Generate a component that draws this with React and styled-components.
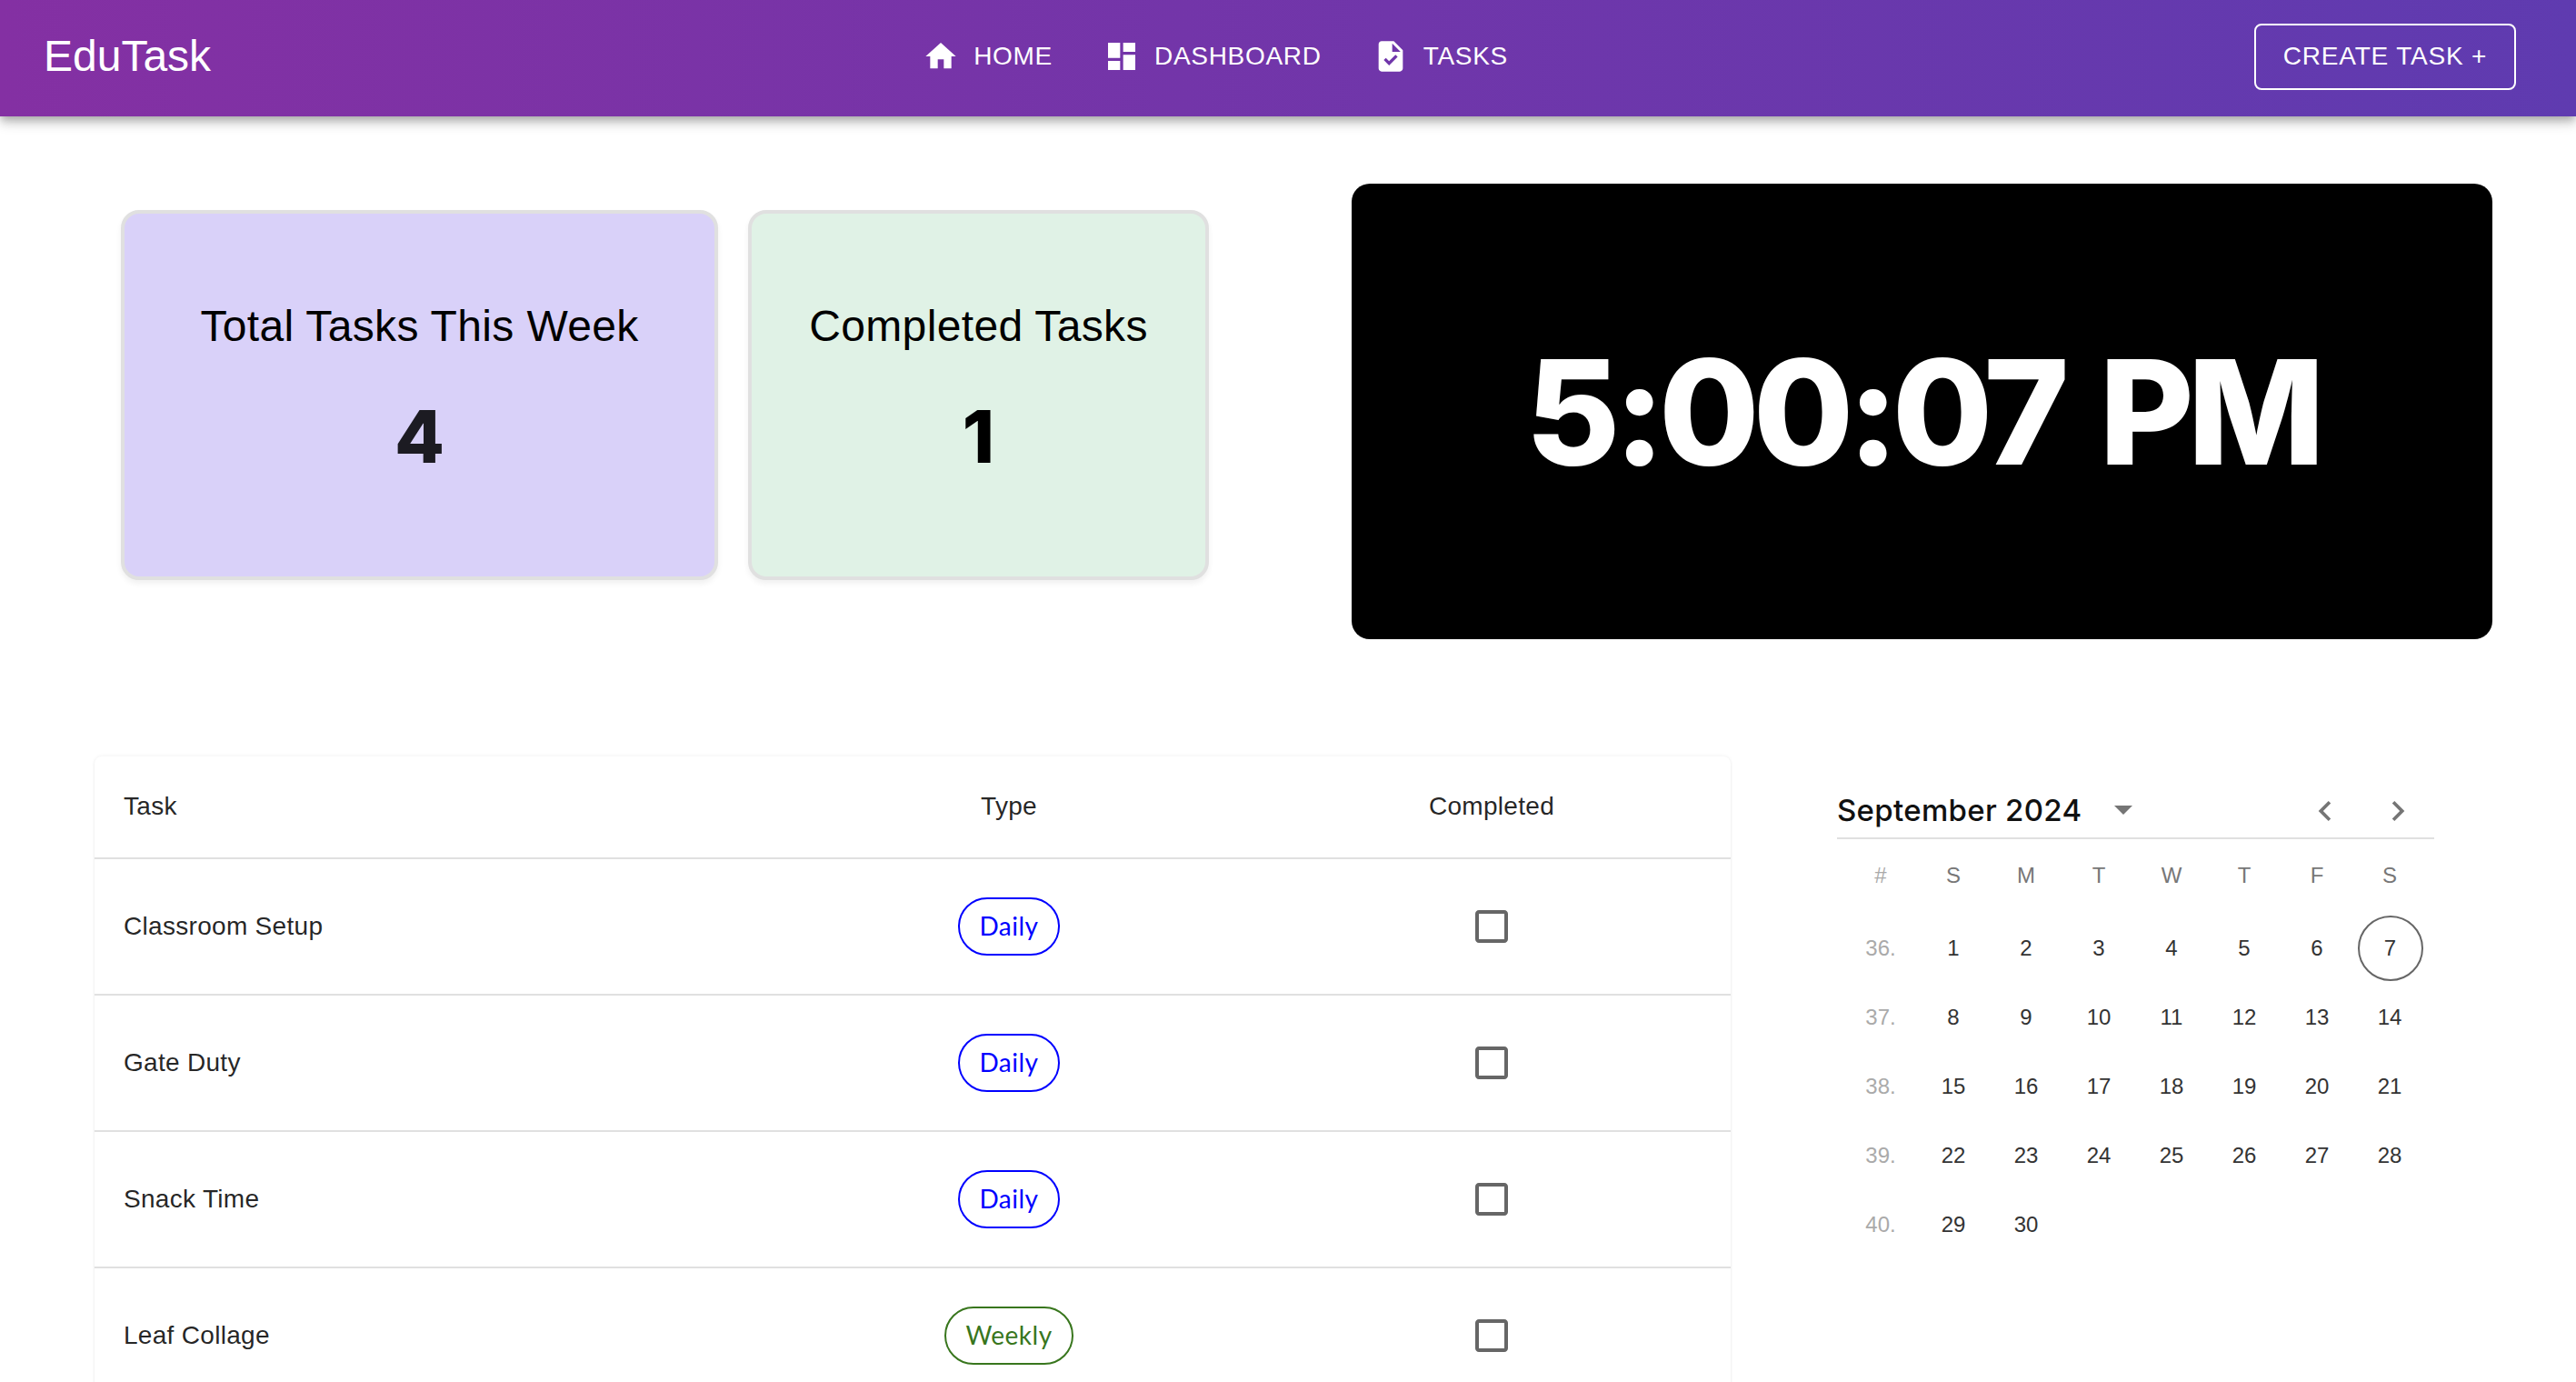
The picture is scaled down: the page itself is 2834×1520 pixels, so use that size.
import React from 'react'
import styled, { createGlobalStyle } from 'styled-components'

const GlobalStyle = createGlobalStyle`
  html, body {
    margin: 0;
    height: 100%;
    overflow: hidden;
    background: #fff;
    font-family: "Liberation Sans", Arial, sans-serif;
  }
`

const AppBar = styled.header`
  position: relative;
  z-index: 2;
  height: 128px;
  box-sizing: border-box;
  padding: 0 66px 4px 48px;
  display: flex;
  align-items: center;
  justify-content: space-between;
  color: #fff;
  background: linear-gradient(90deg, #8430a3, #5f3bb0);
  box-shadow: 0 4px 8px -2px rgba(0,0,0,.2), 0 8px 10px 0 rgba(0,0,0,.14), 0 2px 20px 0 rgba(0,0,0,.12);
`
const Logo = styled.div`
  font-size: 48px;
  line-height: 1;
`
const Nav = styled.nav`
  display: flex;
  align-items: center;
  gap: 24px;
  margin-right: 38px;
`
const NavItem = styled.a`
  display: flex;
  align-items: center;
  gap: 16px;
  padding: 0 16px;
  font-size: 28px;
  letter-spacing: .7px;
  svg { width: 40px; height: 40px; fill: #fff; }
`
const CreateButton = styled.button`
  width: 288px;
  height: 73px;
  border: 2px solid #fff;
  border-radius: 8px;
  background: transparent;
  color: #fff;
  font-family: inherit;
  font-size: 28px;
  letter-spacing: .02857em;
`

const TopRow = styled.section`
  display: flex;
  align-items: flex-start;
  padding: 74px 0 0 133px;
`
const Cards = styled.div`
  display: flex;
  gap: 33px;
  margin-top: 29px;
  margin-right: 157px;
`
const StatCard = styled.div`
  width: ${p => p.$width}px;
  height: 407px;
  box-sizing: border-box;
  border: 4px solid #e0e0e0;
  border-radius: 20px;
  background: ${p => p.$bg};
  box-shadow: 0 4px 6px rgba(0,0,0,.06);
  text-align: center;
  padding-top: 94px;
`
const StatTitle = styled.div`
  font-size: 48px;
  letter-spacing: .35px;
  line-height: 60px;
  color: #000;
`
const StatValue = styled.div`
  margin-top: 45px;
  font-family: Inter, sans-serif;
  font-size: 80px;
  line-height: 92px;
  font-weight: 800;
  color: ${p => p.$color};
`
const ClockPanel = styled.div`
  width: 1255px;
  height: 501px;
  border-radius: 20px;
  background: #000;
  color: #fff;
  display: flex;
  align-items: center;
  justify-content: center;
  font-family: Inter, sans-serif;
  font-size: 160px;
  font-weight: 800;
  letter-spacing: -7px;
  word-spacing: 12px;
`

const BottomRow = styled.section`
  display: flex;
  align-items: flex-start;
  padding: 129px 0 0 104px;
`
const TaskTable = styled.div`
  width: 1800px;
  flex: none;
  border-radius: 8px;
  box-shadow: 0 -1px 4px rgba(0,0,0,.04), 0 2px 1px -1px rgba(0,0,0,.05), 0 1px 3px 0 rgba(0,0,0,.08);
  color: rgba(0,0,0,.87);
`
const Row = styled.div`
  display: grid;
  grid-template-columns: 738px 536px 526px;
  align-items: center;
  height: ${p => (p.$head ? 113 : 150)}px;
  padding-bottom: ${p => (p.$head ? 2 : 0)}px;
  box-sizing: border-box;
  border-bottom: 2px solid #e0e0e0;
  font-size: 28px;
  letter-spacing: .01071em;
`
const TaskCell = styled.div`
  padding-left: 32px;
`
const CenterCell = styled.div`
  display: flex;
  justify-content: center;
`
const Chip = styled.span`
  display: inline-flex;
  align-items: center;
  height: 64px;
  box-sizing: border-box;
  padding: 0 21px 2px;
  border: 2px solid ${p => p.$color};
  border-radius: 32px;
  color: ${p => p.$color};
  font-family: Lato, sans-serif;
  font-size: 28px;
  letter-spacing: .5px;
`
const BoxIcon = styled.svg`
  width: 48px;
  height: 48px;
  fill: #666;
`

const Calendar = styled.div`
  width: 657px;
  flex: none;
  margin-left: 117px;
  margin-top: 26px;
`
const CalHeader = styled.div`
  display: flex;
  align-items: center;
  height: 65px;
  box-sizing: border-box;
  border-bottom: 2px solid #e0e0e0;
  padding-top: 2px;
`
const CalTitle = styled.div`
  font-family: Inter, sans-serif;
  font-size: 33px;
  font-weight: 500;
  letter-spacing: .3px;
  color: #111;
  width: 305px;
`
const Caret = styled.span`
  width: 0;
  height: 0;
  border-left: 10px solid transparent;
  border-right: 10px solid transparent;
  border-top: 10px solid #757575;
`
const Chevrons = styled.div`
  display: flex;
  gap: 36px;
  margin-left: auto;
  margin-right: 18px;
  margin-top: 2px;
  svg { width: 44px; height: 44px; fill: #757575; }
`
const CalGrid = styled.div`
  display: grid;
  grid-template-columns: repeat(8, 80px);
  grid-auto-rows: 76px;
  padding-left: 8px;
  font-size: 24px;
  text-align: center;
  margin-top: 5px;
  padding-top: 1px;
`
const HeadCell = styled.div`
  display: flex;
  align-items: center;
  justify-content: center;
  padding-bottom: 8px;
  color: ${p => (p.$week ? '#aaa' : '#777')};
`
const DayCell = styled.div`
  display: flex;
  align-items: center;
  justify-content: center;
  color: ${p => (p.$week ? '#aaa' : '#333')};
`
const Today = styled.span`
  width: 72px;
  height: 72px;
  margin-left: 1px;
  box-sizing: border-box;
  border: 2px solid #666;
  border-radius: 50%;
  display: flex;
  align-items: center;
  justify-content: center;
`

const tasks = [
  { name: 'Classroom Setup', type: 'Daily' },
  { name: 'Gate Duty', type: 'Daily' },
  { name: 'Snack Time', type: 'Daily' },
  { name: 'Leaf Collage', type: 'Weekly' },
]

const weeks = [
  ['36.', 1, 2, 3, 4, 5, 6, 7],
  ['37.', 8, 9, 10, 11, 12, 13, 14],
  ['38.', 15, 16, 17, 18, 19, 20, 21],
  ['39.', 22, 23, 24, 25, 26, 27, 28],
  ['40.', 29, 30],
]

export default function App() {
  return (
    <>
      <GlobalStyle />
      <AppBar>
        <Logo>EduTask</Logo>
        <Nav>
          <NavItem>
            <svg viewBox="0 0 24 24"><path d="M10 20v-6h4v6h5v-8h3L12 3 2 12h3v8z" /></svg>
            HOME
          </NavItem>
          <NavItem>
            <svg viewBox="0 0 24 24"><path d="M3 13h8V3H3v10zm0 8h8v-6H3v6zm10 0h8V11h-8v10zm0-18v6h8V3h-8z" /></svg>
            DASHBOARD
          </NavItem>
          <NavItem>
            <svg viewBox="0 0 24 24"><path d="M14 2H6c-1.1 0-1.99.9-1.99 2L4 20c0 1.1.89 2 1.99 2H18c1.1 0 2-.9 2-2V8l-6-6zm-3.06 16L7.4 14.46l1.41-1.41 2.12 2.12 4.24-4.24 1.41 1.41L10.94 18zM13 9V3.5L18.5 9H13z" /></svg>
            TASKS
          </NavItem>
        </Nav>
        <CreateButton>CREATE TASK +</CreateButton>
      </AppBar>

      <TopRow>
        <Cards>
          <StatCard $width={657} $bg="#d9d1f9">
            <StatTitle>Total Tasks This Week</StatTitle>
            <StatValue $color="#1c1b22">4</StatValue>
          </StatCard>
          <StatCard $width={507} $bg="#e0f2e6">
            <StatTitle>Completed Tasks</StatTitle>
            <StatValue $color="#000">1</StatValue>
          </StatCard>
        </Cards>
        <ClockPanel>5:00:07 PM</ClockPanel>
      </TopRow>

      <BottomRow>
        <TaskTable>
          <Row $head>
            <TaskCell>Task</TaskCell>
            <CenterCell>Type</CenterCell>
            <CenterCell>Completed</CenterCell>
          </Row>
          {tasks.map(t => (
            <Row key={t.name}>
              <TaskCell>{t.name}</TaskCell>
              <CenterCell>
                <Chip $color={t.type === 'Daily' ? '#0000ff' : '#38761d'}>{t.type}</Chip>
              </CenterCell>
              <CenterCell>
                <BoxIcon viewBox="0 0 24 24">
                  <path d="M19 5v14H5V5h14m0-2H5c-1.1 0-2 .9-2 2v14c0 1.1.9 2 2 2h14c1.1 0 2-.9 2-2V5c0-1.1-.9-2-2-2z" />
                </BoxIcon>
              </CenterCell>
            </Row>
          ))}
        </TaskTable>

        <Calendar>
          <CalHeader>
            <CalTitle>September 2024</CalTitle>
            <Caret />
            <Chevrons>
              <svg viewBox="0 0 24 24"><path d="M15.41 7.41 14 6l-6 6 6 6 1.41-1.41L10.83 12z" /></svg>
              <svg viewBox="0 0 24 24"><path d="M10 6 8.59 7.41 13.17 12l-4.58 4.59L10 18l6-6z" /></svg>
            </Chevrons>
          </CalHeader>
          <CalGrid>
            {['#', 'S', 'M', 'T', 'W', 'T', 'F', 'S'].map((d, i) => (
              <HeadCell key={i} $week={i === 0}>{d}</HeadCell>
            ))}
            {weeks.flat().map((d, i) => (
              <DayCell key={i} $week={typeof d === 'string'}>
                {d === 7 ? <Today>7</Today> : d}
              </DayCell>
            ))}
          </CalGrid>
        </Calendar>
      </BottomRow>
    </>
  )
}
